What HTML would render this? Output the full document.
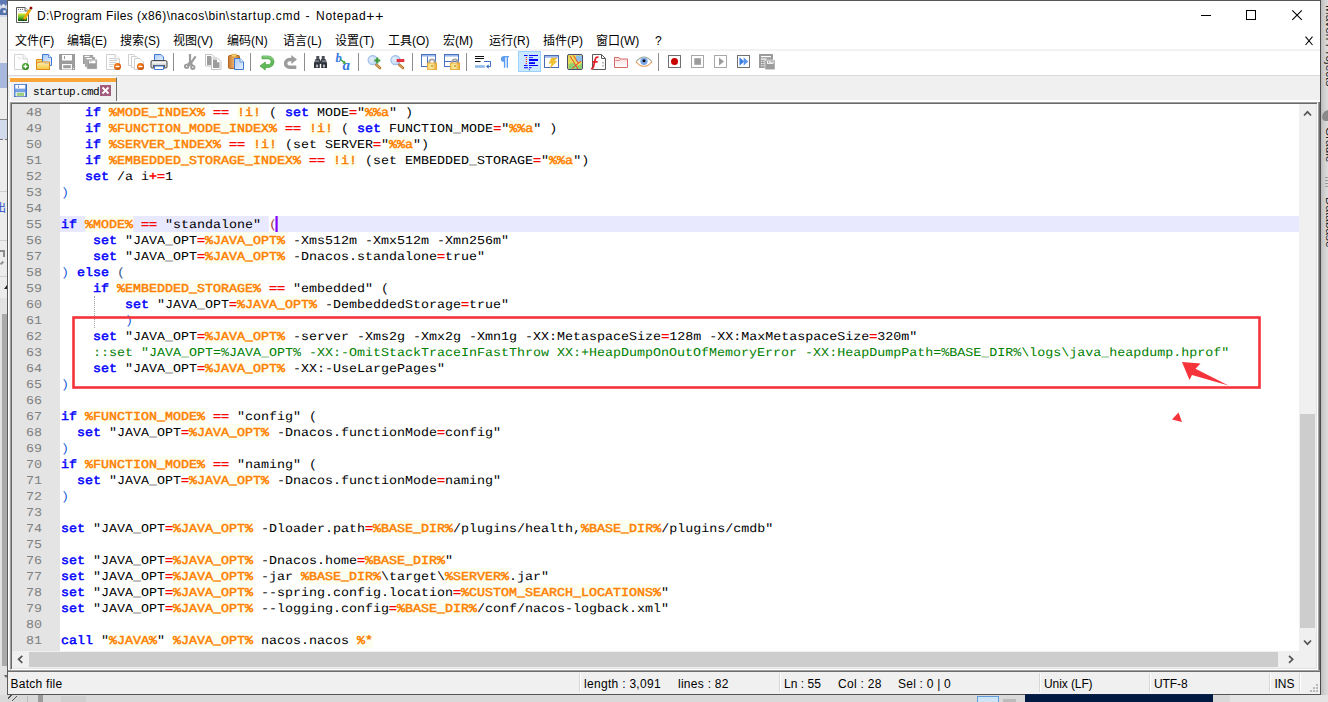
<!DOCTYPE html>
<html lang="zh-CN"><head><meta charset="utf-8"><title>startup.cmd - Notepad++</title>
<style>
*{box-sizing:border-box;margin:0;padding:0}
html,body{width:1328px;height:702px;overflow:hidden;background:#dcdcdc}
body{position:relative;font-family:"Liberation Sans","Noto Sans CJK SC",sans-serif;font-size:12px;color:#000}
.abs{position:absolute}
#lstrip{left:0;top:0;width:8px;height:702px;background:#ececec;overflow:hidden}
#rstrip{left:1321px;top:0;width:7px;height:702px;background:linear-gradient(90deg,#bdbdbd,#c8c8c8 2px,#d2d2d2 4px,#dcdcdc 7px);overflow:hidden}
#rstrip span{position:absolute;left:0;top:0;white-space:nowrap;font-size:11.8px;line-height:14px;transform-origin:0 0;color:#1a1a1a}
#bstrip{left:0;top:695px;width:1328px;height:7px;background:#d9d9d9;overflow:hidden}
#win{left:7px;top:0;width:1314px;height:695px;background:#fff;border:1px solid #555;border-left-color:#5a5a5a;border-right-color:#4a4a4a}
#title{left:37px;top:7px;font-size:12px;line-height:16px;white-space:pre}
#menu span{position:absolute;top:33px;line-height:16px;font-size:12px;white-space:nowrap}
#tbline1{left:8px;top:49px;width:1312px;height:2px;background:#f2f2f2}
#tbline2{left:8px;top:75px;width:1312px;height:1px;background:#d9d9d9}
#tabbar{left:8px;top:76px;width:1312px;height:24px;background:#f0f0f0}
#tab{left:10px;top:77px;width:107px;height:24px;background:#f0f0f0;border-right:1px solid #6e6e6e;border-left:1px solid #fff;border-top:1px solid #fff}
#tabtop{left:10px;top:78px;width:106px;height:4px;background:#faa537}
#tabtxt{left:33px;top:85px;font-family:"Liberation Mono",monospace;font-size:11px;line-height:14px;letter-spacing:-.6px;white-space:nowrap}
#edframe{left:8px;top:100px;width:1312px;height:572px;background:#fff}
#ed{left:10px;top:102px;width:1308px;height:568px;border:1px solid #a0a0a0;border-right-color:#fff;border-bottom-color:#fff;background:#fff;box-shadow:inset 1px 1px 0 #696969,inset -1px -1px 0 #e3e3e3}
#margin{left:12px;top:104px;width:48px;height:547px;background:#e4e4e4}
#code{left:12px;top:104px;width:1287px;height:547px;overflow:hidden;font-family:"Liberation Mono",monospace;font-size:12px;line-height:16px;text-rendering:geometricPrecision}
.ln{height:16px;position:relative}
.num{position:absolute;left:14px;top:0;width:16px;height:16px;line-height:18px;overflow:hidden;font-size:12px;text-align:left;color:#808080;transform:scaleX(1.1111);transform-origin:0 0}
.tx{position:absolute;left:49px;top:0;width:1114px;height:16px;line-height:18px;overflow:hidden;font-size:12px;white-space:pre;transform:scaleX(1.1111);transform-origin:0 0}
.k{color:#0000ff;-webkit-text-stroke:.45px #0000ff}
.v{color:#ff8000;-webkit-text-stroke:.45px #ff8000;background:#fcfff0;display:inline-block}
.o{color:#ff0000;-webkit-text-stroke:.45px #ff0000}
.c{color:#008000}
.p{color:#2a62e0}
.p2{color:#33507f}
.br{color:#a03838;background:#fff;display:inline-block}
.caret{display:inline-block;width:2px;height:18px;background:#8000ff;vertical-align:top;margin-left:-1px}
#guide{left:94px;top:296px;width:0;height:32px;border-left:1px dotted #a0a0a0}
#vs{left:1299px;top:104px;width:17px;height:547px;background:#f0f0f0}
#vthumb{left:1300px;top:414px;width:15px;height:214px;background:#cdcdcd}
#hs{left:12px;top:651px;width:1287px;height:17px;background:#f0f0f0}
#hthumb{left:29px;top:652px;width:1249px;height:15px;background:#cdcdcd}
#corner{left:1299px;top:651px;width:17px;height:17px;background:#f0f0f0}
#status{left:8px;top:672px;width:1312px;height:22px;background:#f0f0f0}
#status span{position:absolute;top:4px;font-size:12px;line-height:16px;white-space:nowrap}
#status i{position:absolute;top:1px;width:1px;height:19px;background:#d7d7d7;border-right:1px solid #fff;box-sizing:content-box}
</style></head><body>
<div id="lstrip" class="abs">
<div class="abs" style="left:0;top:0;width:8px;height:17px;background:#cfd6e8"></div>
<div class="abs" style="left:0;top:0;width:7px;height:6px;background:#5d7ab2;border-radius:0 0 3px 3px"></div>
<div class="abs" style="left:2px;top:4px;width:3px;height:3px;background:#e8ecf6;border-radius:2px"></div>
<div class="abs" style="left:0;top:8px;width:7px;height:7px;background:#5472ac;border-radius:3px 3px 0 0"></div>
<div class="abs" style="left:3px;top:10px;width:3px;height:3px;background:#dfe5f2;border-radius:2px"></div>
<div class="abs" style="left:0;top:63px;width:8px;height:25px;background:#a8b8dc"></div>
<div class="abs" style="left:0;top:119px;width:8px;height:1px;background:#8a8a8a"></div>
<div class="abs" style="left:0;top:120px;width:8px;height:19px;background:#d2dbec"></div>
<div class="abs" style="left:0;top:139px;width:8px;height:1px;background:repeating-linear-gradient(90deg,#777 0 3px,transparent 3px 5px)"></div>
<div class="abs" style="left:0;top:191px;width:8px;height:1px;background:#cfcfcf"></div>
<div class="abs" style="left:-5px;top:202px;width:12px;height:12px;color:#2c50c8;font-size:11px;line-height:12px;overflow:hidden;white-space:nowrap">出</div>
<div class="abs" style="left:0;top:240px;width:8px;height:1px;background:#cfcfcf"></div>
<div class="abs" style="left:0;top:250px;width:5px;height:2px;background:#8c8c8c"></div>
<div class="abs" style="left:3px;top:250px;width:2px;height:7px;background:#8c8c8c"></div>
<div class="abs" style="left:0;top:262px;width:4px;height:2px;background:#8c8c8c;transform:rotate(-45deg)"></div>
<div class="abs" style="left:0;top:276px;width:8px;height:1px;background:#cfcfcf"></div>
<div class="abs" style="left:4px;top:285px;width:0;height:0;border-left:3px solid transparent;border-bottom:4px solid #222"></div>
<div class="abs" style="left:0;top:298px;width:8px;height:397px;background:#e2e2e2"></div>
<div class="abs" style="left:2px;top:314px;width:5px;height:352px;background:#aaa"></div>
<div class="abs" style="left:4px;top:675px;width:0;height:0;border-left:2px solid transparent;border-right:2px solid transparent;border-top:3px solid #666"></div>
</div>
<div id="rstrip" class="abs">
<span style="transform:translate(16px,5px) rotate(90deg)">Maven Projects</span>
<span style="transform:translate(16px,127px) rotate(90deg)">Gradle</span>
<span style="transform:translate(16px,197px) rotate(90deg)">Database</span>
<div class="abs" style="left:1px;top:110px;width:14px;height:11px;border-radius:7px 0 0 4px;background:#8a8a8a"></div>
<div class="abs" style="left:4px;top:177px;width:3px;height:10px;background:repeating-linear-gradient(0deg,#999 0 1px,transparent 1px 3px)"></div>
</div>
<div id="bstrip" class="abs">
<div class="abs" style="left:1025px;top:-1px;width:188px;height:9px;background:#001a41"></div>
<div class="abs" style="left:1230px;top:0;width:98px;height:7px;background:#e4e4e4"></div>
<div class="abs" style="left:977px;top:1px;width:22px;height:7px;background:#cfe3f7;border:1px solid #5e9bd8"></div>
<div class="abs" style="left:1003px;top:4px;width:13px;height:4px;background:#bbb"></div>
<div class="abs" style="left:38px;top:0;width:5px;height:7px;background:#9a9a9a"></div>
<div class="abs" style="left:8px;top:0;width:9px;height:6px;background:repeating-linear-gradient(135deg,transparent 0 2px,#555 2px 3px,transparent 3px 4.5px)"></div>
<div class="abs" style="left:27px;top:1px;width:1px;height:7px;background:#bbb"></div>
<div class="abs" style="left:61px;top:1px;width:25px;height:7px;background:#cfcfcf"></div>
</div>
<div id="win" class="abs"></div>
<div class="abs" style="left:1025px;top:694px;width:188px;height:1px;background:#0a2348"></div>
<div id="title" class="abs"><span style="letter-spacing:.39px">D:\Program Files</span><span style="letter-spacing:.45px"> (x86)\nacos\bin</span><span style="letter-spacing:.73px">\startup.cmd</span><span style="letter-spacing:1.58px"> - </span><span style="letter-spacing:.7px">Notepad</span><span style="letter-spacing:.7px;font-size:14px;line-height:16px;position:relative;top:.5px">++</span></div>
<div id="menu"><span style="left:15px">文件(F)</span><span style="left:67px">编辑(E)</span><span style="left:120px">搜索(S)</span><span style="left:173px">视图(V)</span><span style="left:227px">编码(N)</span><span style="left:283px">语言(L)</span><span style="left:335px">设置(T)</span><span style="left:388px">工具(O)</span><span style="left:443px">宏(M)</span><span style="left:489px">运行(R)</span><span style="left:543px">插件(P)</span><span style="left:596px">窗口(W)</span><span style="left:655px">?</span></div>
<div id="tbline1" class="abs"></div>
<div id="tbline2" class="abs"></div>
<div id="tabbar" class="abs"></div>
<div id="edframe" class="abs"></div>
<div id="tab" class="abs"></div>
<div id="tabtop" class="abs"></div>
<div class="abs" style="left:11px;top:82px;width:105px;height:1px;background:#ecf3fa"></div>
<div id="tabtxt" class="abs">startup.cmd</div>
<div class="abs" style="left:1318px;top:102px;width:1px;height:570px;background:#a0a0a0"></div>
<div class="abs" style="left:1319px;top:102px;width:1px;height:570px;background:#6d6d6d"></div>
<div class="abs" style="left:8px;top:670px;width:1312px;height:1px;background:#a0a0a0"></div>
<div class="abs" style="left:8px;top:671px;width:1312px;height:1px;background:#6d6d6d"></div>
<div class="abs" style="left:9px;top:102px;width:1px;height:568px;background:#e8e8e8"></div>
<div id="ed" class="abs"></div>
<div id="margin" class="abs"></div>
<div class="abs" style="left:60px;top:216px;width:1239px;height:16px;background:#e8e8ff"></div>
<div id="code" class="abs">
<div class="ln"><span class="num">48</span><span class="tx">   <span class="k">if</span> <span class="v">%MODE_INDEX%</span> <span class="o">==</span> <span class="v">!i!</span> ( <span class="k">set</span> MODE<span class="o">=</span>"<span class="v">%%a</span>" )</span></div>
<div class="ln"><span class="num">49</span><span class="tx">   <span class="k">if</span> <span class="v">%FUNCTION_MODE_INDEX%</span> <span class="o">==</span> <span class="v">!i!</span> ( <span class="k">set</span> FUNCTION_MODE<span class="o">=</span>"<span class="v">%%a</span>" )</span></div>
<div class="ln"><span class="num">50</span><span class="tx">   <span class="k">if</span> <span class="v">%SERVER_INDEX%</span> <span class="o">==</span> <span class="v">!i!</span> (set SERVER<span class="o">=</span>"<span class="v">%%a</span>")</span></div>
<div class="ln"><span class="num">51</span><span class="tx">   <span class="k">if</span> <span class="v">%EMBEDDED_STORAGE_INDEX%</span> <span class="o">==</span> <span class="v">!i!</span> (set EMBEDDED_STORAGE<span class="o">=</span>"<span class="v">%%a</span>")</span></div>
<div class="ln"><span class="num">52</span><span class="tx">   <span class="k">set</span> /a i<span class="o">+=</span>1</span></div>
<div class="ln"><span class="num">53</span><span class="tx"><span class="p">)</span></span></div>
<div class="ln"><span class="num">54</span><span class="tx"></span></div>
<div class="ln cur"><span class="num">55</span><span class="tx"><span class="k">if</span> <span class="v">%MODE%</span> <span class="o">==</span> "standalone" <span class="br">(</span><span class="caret"></span></span></div>
<div class="ln"><span class="num">56</span><span class="tx">    <span class="k">set</span> "JAVA_OPT<span class="o">=</span><span class="v">%JAVA_OPT%</span> -Xms512m -Xmx512m -Xmn256m"</span></div>
<div class="ln"><span class="num">57</span><span class="tx">    <span class="k">set</span> "JAVA_OPT<span class="o">=</span><span class="v">%JAVA_OPT%</span> -Dnacos.standalone<span class="o">=</span>true"</span></div>
<div class="ln"><span class="num">58</span><span class="tx"><span class="p">)</span> <span class="k">else</span> <span class="p2">(</span></span></div>
<div class="ln"><span class="num">59</span><span class="tx">    <span class="k">if</span> <span class="v">%EMBEDDED_STORAGE%</span> <span class="o">==</span> "embedded" (</span></div>
<div class="ln"><span class="num">60</span><span class="tx">        <span class="k">set</span> "JAVA_OPT<span class="o">=</span><span class="v">%JAVA_OPT%</span> -DembeddedStorage<span class="o">=</span>true"</span></div>
<div class="ln"><span class="num">61</span><span class="tx">        <span class="p">)</span></span></div>
<div class="ln"><span class="num">62</span><span class="tx">    <span class="k">set</span> "JAVA_OPT<span class="o">=</span><span class="v">%JAVA_OPT%</span> -server -Xms2g -Xmx2g -Xmn1g -XX:MetaspaceSize<span class="o">=</span>128m -XX:MaxMetaspaceSize<span class="o">=</span>320m"</span></div>
<div class="ln"><span class="num">63</span><span class="tx">    <span class="c">::set "JAVA_OPT=%JAVA_OPT% -XX:-OmitStackTraceInFastThrow XX:+HeapDumpOnOutOfMemoryError -XX:HeapDumpPath=%BASE_DIR%\logs\java_heapdump.hprof"</span></span></div>
<div class="ln"><span class="num">64</span><span class="tx">    <span class="k">set</span> "JAVA_OPT<span class="o">=</span><span class="v">%JAVA_OPT%</span> -XX:-UseLargePages"</span></div>
<div class="ln"><span class="num">65</span><span class="tx"><span class="p">)</span></span></div>
<div class="ln"><span class="num">66</span><span class="tx"></span></div>
<div class="ln"><span class="num">67</span><span class="tx"><span class="k">if</span> <span class="v">%FUNCTION_MODE%</span> <span class="o">==</span> "config" (</span></div>
<div class="ln"><span class="num">68</span><span class="tx">  <span class="k">set</span> "JAVA_OPT<span class="o">=</span><span class="v">%JAVA_OPT%</span> -Dnacos.functionMode<span class="o">=</span>config"</span></div>
<div class="ln"><span class="num">69</span><span class="tx"><span class="p">)</span></span></div>
<div class="ln"><span class="num">70</span><span class="tx"><span class="k">if</span> <span class="v">%FUNCTION_MODE%</span> <span class="o">==</span> "naming" (</span></div>
<div class="ln"><span class="num">71</span><span class="tx">  <span class="k">set</span> "JAVA_OPT<span class="o">=</span><span class="v">%JAVA_OPT%</span> -Dnacos.functionMode<span class="o">=</span>naming"</span></div>
<div class="ln"><span class="num">72</span><span class="tx"><span class="p">)</span></span></div>
<div class="ln"><span class="num">73</span><span class="tx"></span></div>
<div class="ln"><span class="num">74</span><span class="tx"><span class="k">set</span> "JAVA_OPT<span class="o">=</span><span class="v">%JAVA_OPT%</span> -Dloader.path<span class="o">=</span><span class="v">%BASE_DIR%</span>/plugins/health,<span class="v">%BASE_DIR%</span>/plugins/cmdb"</span></div>
<div class="ln"><span class="num">75</span><span class="tx"></span></div>
<div class="ln"><span class="num">76</span><span class="tx"><span class="k">set</span> "JAVA_OPT<span class="o">=</span><span class="v">%JAVA_OPT%</span> -Dnacos.home<span class="o">=</span><span class="v">%BASE_DIR%</span>"</span></div>
<div class="ln"><span class="num">77</span><span class="tx"><span class="k">set</span> "JAVA_OPT<span class="o">=</span><span class="v">%JAVA_OPT%</span> -jar <span class="v">%BASE_DIR%</span>\target\<span class="v">%SERVER%</span>.jar"</span></div>
<div class="ln"><span class="num">78</span><span class="tx"><span class="k">set</span> "JAVA_OPT<span class="o">=</span><span class="v">%JAVA_OPT%</span> --spring.config.location<span class="o">=</span><span class="v">%CUSTOM_SEARCH_LOCATIONS%</span>"</span></div>
<div class="ln"><span class="num">79</span><span class="tx"><span class="k">set</span> "JAVA_OPT<span class="o">=</span><span class="v">%JAVA_OPT%</span> --logging.config<span class="o">=</span><span class="v">%BASE_DIR%</span>/conf/nacos-logback.xml"</span></div>
<div class="ln"><span class="num">80</span><span class="tx"></span></div>
<div class="ln"><span class="num">81</span><span class="tx"><span class="k">call</span> "<span class="v">%JAVA%</span>" <span class="v">%JAVA_OPT%</span> nacos.nacos <span class="v">%*</span></span></div>
</div>
<div id="guide" class="abs"></div>
<div id="vs" class="abs"></div><div id="vthumb" class="abs"></div>
<div id="hs" class="abs"></div><div id="hthumb" class="abs"></div><div id="corner" class="abs"></div>
<div id="status" class="abs">
<span style="left:2.5px;letter-spacing:.26px">Batch file</span>
<i style="left:571px"></i><span style="left:576px;letter-spacing:.3px">length : 3,091</span><span style="left:670px;letter-spacing:.27px">lines : 82</span>
<i style="left:771px"></i><span style="left:776px;letter-spacing:.04px">Ln : 55</span><span style="left:830px;letter-spacing:.29px">Col : 28</span><span style="left:890px;letter-spacing:.23px">Sel : 0 | 0</span>
<i style="left:1031px"></i><span style="left:1036px;letter-spacing:-.09px">Unix (LF)</span>
<i style="left:1141px"></i><span style="left:1146px;letter-spacing:-.1px">UTF-8</span>
<i style="left:1261px"></i><span style="left:1266.500px">INS</span>
<i style="left:1291px"></i>
</div>
<svg class="abs" style="left:0;top:0" width="1328" height="702" viewBox="0 0 1328 702">
<defs>
<linearGradient id="gG" x1="0" y1="0" x2="0" y2="1"><stop offset="0" stop-color="#dfe93a"/><stop offset=".55" stop-color="#58b82a"/><stop offset="1" stop-color="#064a06"/></linearGradient>
<linearGradient id="gB" x1="0" y1="0" x2="1" y2="1"><stop offset="0" stop-color="#a9cbf8"/><stop offset="1" stop-color="#e8f1ff"/></linearGradient>
<linearGradient id="gF" x1="0" y1="0" x2="0" y2="1"><stop offset="0" stop-color="#fdf0b0"/><stop offset="1" stop-color="#f5c63a"/></linearGradient>
<linearGradient id="gL" x1="0" y1="0" x2="1" y2="0"><stop offset="0" stop-color="#f6d76a"/><stop offset=".5" stop-color="#fbe9a0"/><stop offset="1" stop-color="#e9a526"/></linearGradient>
<linearGradient id="gC" x1="0" y1="0" x2="1" y2="0"><stop offset="0" stop-color="#c9792a"/><stop offset=".5" stop-color="#e8b070"/><stop offset="1" stop-color="#c07020"/></linearGradient>
<linearGradient id="gP" x1="0" y1="0" x2="0" y2="1"><stop offset="0" stop-color="#f9dada"/><stop offset="1" stop-color="#fff"/></linearGradient>
<radialGradient id="gO" cx=".4" cy=".35" r=".7"><stop offset="0" stop-color="#ff8a20"/><stop offset="1" stop-color="#c84800"/></radialGradient>
<radialGradient id="gGr" cx=".4" cy=".35" r=".7"><stop offset="0" stop-color="#5fc040"/><stop offset="1" stop-color="#1f7a10"/></radialGradient>
<radialGradient id="gLens" cx=".4" cy=".4" r=".7"><stop offset="0" stop-color="#e6f0fc"/><stop offset="1" stop-color="#b8d0f0"/></radialGradient>
</defs>
<!-- title icon -->
<g>
<path d="M16.5 7.5h8.5l3.5 3.5v11.5h-12z" fill="#fff" stroke="#5a5a5a"/>
<path d="M25 7.5v3.5h3.5" fill="#fff" stroke="#5a5a5a"/>
<circle cx="18.6" cy="9.4" r=".55" fill="#666"/><circle cx="20.6" cy="9.4" r=".55" fill="#666"/><circle cx="22.6" cy="9.4" r=".55" fill="#666"/>
<rect x="18.3" y="11" width="6" height=".8" fill="#c5d6e8"/>
<rect x="18" y="13.4" width="9" height="7.6" fill="url(#gG)"/>
<path d="M31 8.2L23.8 19.6" stroke="#f2a900" stroke-width="2.6"/>
<path d="M30.2 9.6l1.4-2.2" stroke="#8fa4c8" stroke-width="2.4"/>
<rect x="29.8" y="6.8" width="2.4" height="2.2" fill="#a30000"/>
<path d="M23 20.4l.6-2 1.4.9z" fill="#5a3a10"/>
</g>
<!-- window controls -->
<g stroke="#000" stroke-width="1" fill="none">
<path d="M1201 15.5h10"/>
<rect x="1246.500" y="10.500" width="9" height="9"/>
<path d="M1292.300 10.300l9.500 9.500M1301.800 10.300l-9.500 9.500" stroke-width="1.100"/>
</g>
<!-- toolbar separators -->
<g stroke="#8d8d8d" stroke-width="1">
<path d="M173.500 53v18M250.500 53v18M304.500 53v18M358.500 53v18M412.500 53v18M466.500 53v18M658.500 53v18"/>
</g>
<!-- 1 new -->
<g>
<path d="M14.500 54.500h8.500l4.500 4.500v10.500h-13z" fill="#fff" stroke="#d2d2d2"/>
<path d="M23 54.500v4.500h4.500" fill="#f4f4f4" stroke="#d8d8d8"/>
<path d="M17 57.500h4M18 59h5" stroke="#ececec"/>
<circle cx="25.500" cy="66.500" r="3.500" fill="url(#gGr)"/>
<path d="M23.500 66.500h4M25.500 64.500v4" stroke="#fff" stroke-width="1.300"/>
</g>
<!-- 2 open -->
<g>
<path d="M36.500 59.500h5.500l1 1.500h6.500v8.500h-13z" fill="#f6d26a" stroke="#e08a1e"/>
<path d="M42.500 54.500h6l3 3v8h-9z" fill="url(#gB)" stroke="#3f78d0"/>
<path d="M48.500 54.500v3h3" fill="#e4eefc" stroke="#3f78d0" stroke-width=".7"/>
<path d="M36.500 69.500v-6.500l3.500-1h9.500v7.500z" fill="url(#gF)" stroke="#e08a1e"/>
<path d="M44 63.500h5" stroke="#c9c9b0" stroke-width=".8"/>
</g>
<!-- 3 save -->
<g>
<path d="M59 54h16v16h-15l-1-1z" fill="#9c9c9c"/>
<rect x="62" y="55" width="10" height="5.500" fill="#fff"/>
<rect x="64" y="56" width="1" height="3" fill="#9c9c9c"/>
<rect x="62" y="64" width="10" height="5.500" fill="#fff"/>
<rect x="63.200" y="65.200" width="7.600" height="3" fill="#9c9c9c"/>
<rect x="73" y="68" width="1" height="1" fill="#fff"/>
</g>
<!-- 4 save all -->
<g fill="#9c9c9c">
<rect x="83" y="55" width="10" height="9"/>
<rect x="84.500" y="55.800" width="5" height="1.300" fill="#fff"/>
<rect x="85" y="57" width="10" height="10" stroke="#dcdcdc" stroke-width=".4"/>
<rect x="86.500" y="58" width="5.500" height="1.300" fill="#fff"/>
<rect x="87" y="59.500" width="10" height="9.500" stroke="#dcdcdc" stroke-width=".4"/>
<rect x="89" y="60.500" width="6.500" height="2.800" fill="#fff"/>
<rect x="90.300" y="60.500" width=".9" height="1.800"/>
</g>
<!-- 5 close -->
<g>
<path d="M106.500 54.500h8.500l4.500 4.500v10.500h-13z" fill="#fff" stroke="#cfcfcf"/>
<path d="M115 54.500v4.500h4.500" fill="#f7f7f7" stroke="#cfcfcf"/>
<path d="M109 58.500h6M109 60.500h8M109 62.500h7M109 64.500h5M109 66.500h4" stroke="#c4c4c4" stroke-width=".8"/>
<circle cx="117.500" cy="66.500" r="3.500" fill="url(#gO)"/>
<rect x="115.500" y="65.800" width="4" height="1.400" fill="#fff"/>
</g>
<!-- 6 close all -->
<g>
<path d="M128.500 54.500h5l2.500 2.500v8.500h-7.500z" fill="#fff" stroke="#cfcfcf"/>
<path d="M131.500 56.500h5l2.500 2.500v8.500h-7.500z" fill="#fff" stroke="#cfcfcf"/>
<path d="M134.500 58.500h5.500l3.500 3.500v7.500h-9z" fill="#fff" stroke="#cfcfcf"/>
<circle cx="140.500" cy="66.500" r="3.500" fill="url(#gO)"/>
<rect x="138.500" y="65.800" width="4" height="1.400" fill="#fff"/>
</g>
<!-- 7 print -->
<g>
<path d="M154.500 61v-6.500h6.500l2.500 2.500v4z" fill="url(#gB)" stroke="#3f78d0"/>
<path d="M152.500 60.500h13q1.500 0 1.500 1.500v5q0 1-1 1h-14q-1 0-1-1v-5q0-1.500 1.500-1.500z" fill="#d8d8d8" stroke="#4a4a4a"/>
<rect x="152" y="62" width="14" height="1.500" fill="#f4f4f4"/>
<rect x="153" y="65" width="12" height="2.500" fill="#555"/>
<path d="M154.500 66h9v3.500h-9z" fill="#fff" stroke="#3f78d0"/>
</g>
<!-- cut -->
<g stroke="#9c9c9c" fill="none" stroke-linecap="butt">
<path d="M190 54v10.500" stroke-width="2.200"/>
<path d="M195.600 56.300l-6.600 9.500" stroke-width="2.300"/>
<path d="M190 62.500l-2.500 2.300M190.500 63l1.800 2.500" stroke-width="2.200"/>
<circle cx="186.600" cy="66.300" r="1.700" stroke-width="1.900"/>
<circle cx="192.800" cy="67.300" r="1.700" stroke-width="1.900"/>
</g>
<!-- copy -->
<g>
<path d="M205.500 54.500h6.500l3 3v8.500h-9.500z" fill="#fff" stroke="#c4c4c4"/>
<path d="M207 56h4.300v2.700h2.700v6.300h-7z" fill="#9c9c9c"/>
<path d="M211.500 58h6l3.500 3.500v8h-9.500z" fill="#fff" stroke="#c4c4c4"/>
<path d="M213 59.500h4v2.700h2.500v5.800h-6.500z" fill="#9c9c9c"/>
</g>
<!-- paste -->
<g>
<rect x="228.500" y="55.500" width="11" height="13" rx="1.200" fill="url(#gC)" stroke="#b5651d"/>
<rect x="231.500" y="54.300" width="5" height="2.600" rx=".6" fill="#f7d070" stroke="#c98a2a" stroke-width=".6"/>
<path d="M234.500 58.500h5.500l3.500 3.500v7.500h-9z" fill="url(#gB)" stroke="#3f78d0"/>
<path d="M240 58.500v3.500h3.500" fill="#e8f1ff" stroke="#3f78d0" stroke-width=".7"/>
</g>
<!-- undo -->
<g>
<path d="M262 56H268.200A5.750 5.750 0 0 1 268.200 67.500H265.300V70L260 66L265.300 62V64.600H268.200A2.900 2.900 0 0 0 268.200 58.800H262Z" fill="#62b95a" stroke="#3f9f3c" stroke-width=".7"/>
<path d="M262.500 56.800h5.700a5 5 0 0 1 4.600 3" fill="none" stroke="#a8dca0" stroke-width=".8"/>
</g>
<!-- redo -->
<g>
<path d="M291.300 55L297 59.500L291.300 64V61.300H289.500A2.150 2.150 0 0 0 289.500 65.600H296.300V69H289.500A5.600 5.600 0 0 1 289.500 57.800H291.300Z" fill="#9c9c9c"/>
</g>
<!-- find binoculars -->
<g>
<path d="M316.300 56h3v3h-3zM321.700 56h3v3h-3z" fill="#4a4f58"/>
<path d="M315.500 59h4.500v1.500h1v-1.500h4.500l1.500 4v5h-5.500v-4h-2v4h-5.500v-5z" fill="#3b4048"/>
<rect x="314.500" y="63.500" width="5" height="4.500" fill="#1c1f24"/>
<rect x="321.500" y="63.500" width="5" height="4.500" fill="#1c1f24"/>
<rect x="315.800" y="64.500" width="2.400" height="3" fill="#aeb4bd"/>
<rect x="322.800" y="64.500" width="2.400" height="3" fill="#aeb4bd"/>
<rect x="315" y="60.500" width="4" height="1.200" fill="#8c929c"/>
<rect x="322" y="60.500" width="4" height="1.200" fill="#8c929c"/>
</g>
<!-- replace -->
<g font-family="Liberation Serif,serif" font-style="italic" font-weight="bold" fill="#2f78e0">
<text x="335.500" y="62" font-size="12.500">b</text>
<text x="342.500" y="69.600" font-size="15">a</text>
<path d="M340.500 59.500l4 3.300" stroke="#3aa23a" stroke-width="1.400"/>
<path d="M346 64l-3.600-.6 2.300-2.700z" fill="#3aa23a"/>
</g>
<!-- zoom in -->
<g>
<path d="M376 64.500l4 3.500" stroke="#b5752a" stroke-width="2.600" stroke-linecap="round"/>
<path d="M376.500 65l3.300 2.900" stroke="#e8c28a" stroke-width=".9" stroke-linecap="round"/>
<circle cx="372.700" cy="60.200" r="4.600" fill="url(#gLens)" stroke="#9dbde8" stroke-width="1.100"/>
<path d="M374.300 60.500h6M377.300 57.500v6" stroke="#3c9a3c" stroke-width="2.200"/>
</g>
<!-- zoom out -->
<g>
<path d="M399 64.500l4 3.500" stroke="#b5752a" stroke-width="2.600" stroke-linecap="round"/>
<path d="M399.500 65l3.300 2.900" stroke="#e8c28a" stroke-width=".9" stroke-linecap="round"/>
<circle cx="395.500" cy="60.200" r="4.600" fill="url(#gLens)" stroke="#9dbde8" stroke-width="1.100"/>
<rect x="397" y="59.300" width="7" height="2.500" fill="#f0303a" stroke="#d01020" stroke-width=".5"/>
</g>
<!-- sync v -->
<g>
<rect x="421.500" y="54.500" width="14" height="12" fill="#fff" stroke="#4a72c0"/>
<rect x="422" y="55" width="13" height="1.600" fill="#9db8e8"/>
<path d="M427.500 56.500v10" stroke="#4a72c0"/>
<path d="M429.300 63.500v-1.500q0-2.600 2.700-2.600t2.700 2.600v1.500" fill="none" stroke="#a4a4a4" stroke-width="1.900"/>
<rect x="427.300" y="63" width="9.400" height="6.600" fill="url(#gL)" stroke="#e39a20" stroke-width=".7"/>
<rect x="431.500" y="65" width="1" height="2" fill="#a87418"/>
</g>
<!-- sync h -->
<g>
<rect x="444.500" y="54.500" width="14" height="12" fill="#fff" stroke="#4a72c0"/>
<rect x="445" y="55" width="13" height="1.600" fill="#9db8e8"/>
<path d="M444.500 61.500h14" stroke="#4a72c0"/>
<path d="M452.300 63.500v-1.500q0-2.600 2.700-2.600t2.700 2.600v1.500" fill="none" stroke="#a4a4a4" stroke-width="1.900"/>
<rect x="450.300" y="63" width="9.400" height="6.600" fill="url(#gL)" stroke="#e39a20" stroke-width=".7"/>
<rect x="454.500" y="65" width="1" height="2" fill="#a87418"/>
</g>
<!-- wrap -->
<g>
<path d="M475 56.500h9M475 58.500h9M475 61.500h5.500" stroke="#111" stroke-width="1"/>
<rect x="475" y="65.200" width="9.800" height="2.600" fill="#8fb8ea"/>
<path d="M484 61.500h6.500v5h-2.500" fill="none" stroke="#3a6fc4" stroke-width="1"/>
<path d="M486 66.500l2.600-2.200v4.400z" fill="#3a6fc4"/>
</g>
<!-- pilcrow -->
<g>
<path d="M504.300 56h4.700v1.300h-1v10.500h-1.400v-10.500h-1.300v10.500h-1.400v-6q-3 0-3-2.900t3.400-2.900z" fill="#5d9df0"/>
</g>
<!-- indent guide active -->
<g>
<rect x="518.500" y="51.500" width="22" height="20" fill="#cce8ff" stroke="#99d1ff"/>
<g fill="#0000ff">
<rect x="524" y="55" width="3.600" height="1"/><rect x="529" y="55" width="9" height="1"/>
<rect x="529" y="57.300" width="4" height=".8"/>
<rect x="529" y="59" width="9" height="2"/>
<rect x="529" y="62.200" width="6" height="1.800"/>
<rect x="524" y="65" width="3.600" height="1"/><rect x="529" y="65" width="9" height="1"/>
<rect x="524" y="67.200" width="4" height="1"/><rect x="529" y="67.200" width="2.500" height="1"/>
<rect x="528.800" y="69.200" width="1" height="1"/>
</g>
<path d="M526.300 57v7.500" stroke="#ff0000" stroke-width="1" stroke-dasharray="1 1"/>
</g>
<!-- user lang -->
<g>
<rect x="544.500" y="55.500" width="14" height="12" fill="#fff" stroke="#4a6cb4"/>
<rect x="545" y="56" width="13" height="1.800" fill="#9db8e8"/>
<path d="M551.500 58l5.500 0-3 3.300h3l-7 6.700 2-4.700h-3z" fill="#f2c230" stroke="#e0a820" stroke-width=".4"/>
</g>
<!-- doc map -->
<g>
<rect x="567.500" y="54.500" width="15" height="15" rx="1.500" fill="#e4dc5a" stroke="#4c4c6c"/>
<rect x="576" y="55.500" width="6" height="6" fill="#8cc0e8"/>
<path d="M568.500 64.500q4-3 7 0t6.500-1.500v6h-13.500z" fill="#8fd070"/>
<path d="M570 56l8 13M581 61l-9 7.500M573.500 55.500l5 8" stroke="#f04028" stroke-width="1" fill="none"/>
</g>
<!-- function list -->
<g>
<path d="M592.500 54.500h9l4 4v11h-13z" fill="#fff" stroke="#5a5a5a"/>
<path d="M601.500 54.500v4h4" fill="none" stroke="#5a5a5a"/>
<path d="M603 62v5" stroke="#7a7a7a" stroke-dasharray="1.500 1.500"/>
<path d="M598.500 57.300q-2.600-.8-3.300 2.200l-1.800 7.500q-.6 2-2.400 1.400M592.300 61.800h5.400" fill="none" stroke="#e8202a" stroke-width="1.700"/>
</g>
<!-- folder pink -->
<g>
<path d="M614.500 57.500h4.500l1 1.500h7.500v8.500h-13z" fill="url(#gP)" stroke="#d46a6a"/>
<path d="M615.500 60.500h4l1-1" stroke="#e08a8a" fill="none"/>
</g>
<!-- eye -->
<g>
<path d="M636 61.800q8-9.500 16 0q-8 9-16 0z" fill="#fff"/>
<path d="M636 61.800q8-9.500 16 0" fill="none" stroke="#9aa89a" stroke-width="1.100"/>
<path d="M636 61.800q8 9 16 0" fill="none" stroke="#e8a060" stroke-width="1.100"/>
<circle cx="644" cy="61.200" r="3.700" fill="#7eaae6"/>
<circle cx="644" cy="60.800" r="1.500" fill="#0a0a14"/>
</g>
<!-- record -->
<g>
<rect x="668.500" y="55.500" width="12" height="12" fill="#fff" stroke="#707070"/>
<circle cx="674.500" cy="61.500" r="3.500" fill="#c80000"/>
</g>
<!-- stop -->
<g>
<rect x="691.500" y="55.500" width="12" height="12" fill="#fff" stroke="#a8a8a8"/>
<rect x="694.300" y="58.200" width="6.600" height="6.600" fill="#9c9c9c"/>
</g>
<!-- play -->
<g>
<rect x="714.500" y="55.500" width="12" height="12" fill="#fff" stroke="#a8a8a8"/>
<path d="M719 57.500l5 4-5 4z" fill="#9c9c9c"/>
</g>
<!-- ff -->
<g>
<rect x="737.500" y="55.500" width="12" height="12" fill="#fff" stroke="#707070"/>
<path d="M739.500 57.300l4.600 4.200-4.600 4.200z" fill="#3a7ce0"/>
<path d="M743.600 57.300l4.600 4.200-4.600 4.200z" fill="#5a96ee"/>
</g>
<!-- save macro -->
<g fill="#9c9c9c">
<rect x="759" y="54" width="14" height="14"/>
<rect x="761" y="56" width="10" height="1.200" fill="#fff"/>
<rect x="761" y="58.500" width="5.500" height="1.200" fill="#fff"/>
<g fill="#fff"><rect x="761.200" y="60.800" width="1.100" height="1.100"/><rect x="763.400" y="60.800" width="1.100" height="1.100"/><rect x="761.200" y="63" width="1.100" height="1.100"/><rect x="763.400" y="63" width="1.100" height="1.100"/><rect x="761.200" y="65.200" width="1.100" height="1.100"/><rect x="763.400" y="65.200" width="1.100" height="1.100"/></g>
<rect x="765" y="60" width="10" height="9.800" stroke="#fff" stroke-width=".5"/>
<rect x="767" y="60.800" width="6.500" height="3" fill="#fff"/>
<rect x="768.200" y="61.200" width="1.200" height="1.800"/><rect x="770.500" y="61.200" width="2.500" height="1.200"/>
</g>
<!-- menubar X -->
<path d="M1305.500 36.700l7 8.300M1312.500 36.700l-7 8.300" stroke="#000" stroke-width="1.050" fill="none"/>
<!-- tab icon -->
<g>
<rect x="14" y="84" width="13" height="13" fill="#5d8ad2"/>
<path d="M26 84h1v13h-13v-1h12z" fill="#3f6cb8"/>
<rect x="15.300" y="85" width="9.900" height="3.700" fill="#fcfdff"/>
<rect x="18" y="85.500" width=".9" height="2.400" fill="#5d8ad2"/>
<rect x="15.300" y="89.200" width="9.900" height="2.600" fill="#7ba5e6"/>
<rect x="15.500" y="92.200" width="9.700" height="4.100" fill="#f2f6fc"/>
<rect x="16.800" y="92.900" width="7.200" height="3" fill="#9dcf7c"/>
</g>
<!-- tab close -->
<g>
<rect x="100" y="85" width="11" height="11" fill="#a25c7c"/>
<path d="M102.500 87.500l6 6M108.500 87.500l-6 6" stroke="#fff" stroke-width="1.800"/>
</g>
<!-- scrollbar arrows -->
<g fill="none" stroke="#555" stroke-width="1.700">
<path d="M1304 115.500l3.500-3.700 3.500 3.700"/>
<path d="M1304 640.500l3.500 3.700 3.500-3.700"/>
<path d="M22.300 655.800l-3.700 3.500 3.700 3.500"/>
<path d="M1289 655.800l3.700 3.500-3.700 3.500"/>
</g>
<!-- resize grip -->
<g fill="#b8b8b8">
<rect x="1316" y="684" width="2" height="2"/><rect x="1313" y="687" width="2" height="2"/><rect x="1316" y="687" width="2" height="2"/><rect x="1310" y="690" width="2" height="2"/><rect x="1313" y="690" width="2" height="2"/><rect x="1316" y="690" width="2" height="2"/>
</g>
<!-- annotation -->
<g>
<rect x="73.500" y="317.500" width="1186" height="70" fill="none" stroke="#f5333a" stroke-width="2.600"/>
<path d="M1182 362l18.500 1.500-5 5.300 33 16.700-36.500-10.500-2.500 5z" fill="#f5333a"/>
<path d="M1178.500 412.500l3.500 9.500-10-2.500z" fill="#f5333a"/>
</g>

</svg>
</body></html>
